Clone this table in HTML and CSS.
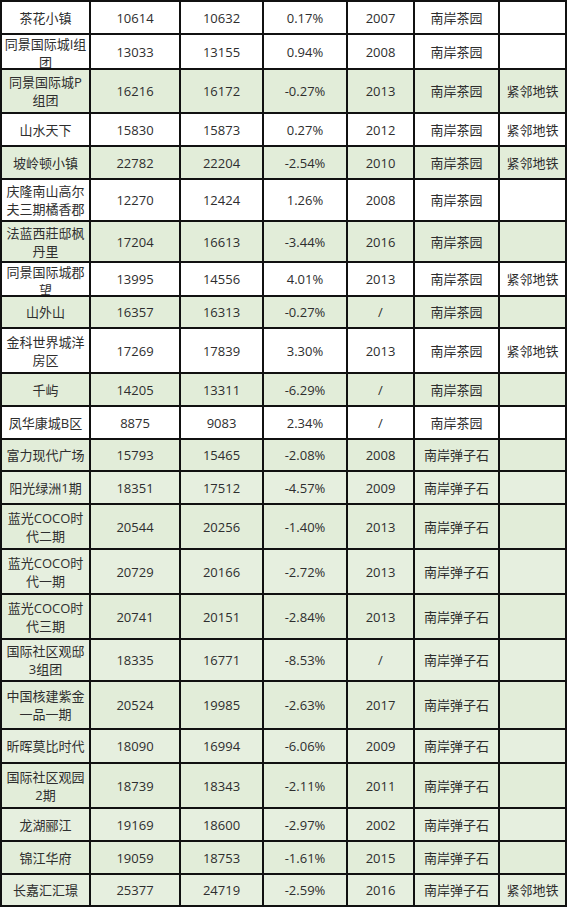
FILE: index.html
```html
<!DOCTYPE html>
<html lang="zh-CN">
<head>
<meta charset="utf-8">
<title>南岸楼盘房价表</title>
<link rel="stylesheet" href="styles.css">
</head>
<body>
<div class="sheet">
  <div class="row w"><div class="c">茶花小镇</div><div class="c">10614</div><div class="c">10632</div><div class="c">0.17%</div><div class="c">2007</div><div class="c">南岸茶园</div><div class="c"></div></div>
  <div class="row w"><div class="c">同景国际城I组团</div><div class="c">13033</div><div class="c">13155</div><div class="c">0.94%</div><div class="c">2008</div><div class="c">南岸茶园</div><div class="c"></div></div>
  <div class="row g"><div class="c">同景国际城P组团</div><div class="c">16216</div><div class="c">16172</div><div class="c">-0.27%</div><div class="c">2013</div><div class="c">南岸茶园</div><div class="c">紧邻地铁</div></div>
  <div class="row w"><div class="c">山水天下</div><div class="c">15830</div><div class="c">15873</div><div class="c">0.27%</div><div class="c">2012</div><div class="c">南岸茶园</div><div class="c">紧邻地铁</div></div>
  <div class="row g"><div class="c">坡岭顿小镇</div><div class="c">22782</div><div class="c">22204</div><div class="c">-2.54%</div><div class="c">2010</div><div class="c">南岸茶园</div><div class="c">紧邻地铁</div></div>
  <div class="row w"><div class="c">庆隆南山高尔夫三期橘香郡</div><div class="c">12270</div><div class="c">12424</div><div class="c">1.26%</div><div class="c">2008</div><div class="c">南岸茶园</div><div class="c"></div></div>
  <div class="row g"><div class="c">法蓝西莊邸枫丹里</div><div class="c">17204</div><div class="c">16613</div><div class="c">-3.44%</div><div class="c">2016</div><div class="c">南岸茶园</div><div class="c"></div></div>
  <div class="row w"><div class="c">同景国际城郡望</div><div class="c">13995</div><div class="c">14556</div><div class="c">4.01%</div><div class="c">2013</div><div class="c">南岸茶园</div><div class="c">紧邻地铁</div></div>
  <div class="row g"><div class="c">山外山</div><div class="c">16357</div><div class="c">16313</div><div class="c">-0.27%</div><div class="c">/</div><div class="c">南岸茶园</div><div class="c"></div></div>
  <div class="row w"><div class="c">金科世界城洋房区</div><div class="c">17269</div><div class="c">17839</div><div class="c">3.30%</div><div class="c">2013</div><div class="c">南岸茶园</div><div class="c">紧邻地铁</div></div>
  <div class="row g"><div class="c">千屿</div><div class="c">14205</div><div class="c">13311</div><div class="c">-6.29%</div><div class="c">/</div><div class="c">南岸茶园</div><div class="c"></div></div>
  <div class="row w"><div class="c">凤华康城B区</div><div class="c">8875</div><div class="c">9083</div><div class="c">2.34%</div><div class="c">/</div><div class="c">南岸茶园</div><div class="c"></div></div>
  <div class="row g"><div class="c">富力现代广场</div><div class="c">15793</div><div class="c">15465</div><div class="c">-2.08%</div><div class="c">2008</div><div class="c">南岸弹子石</div><div class="c"></div></div>
  <div class="row l"><div class="c">阳光绿洲1期</div><div class="c">18351</div><div class="c">17512</div><div class="c">-4.57%</div><div class="c">2009</div><div class="c">南岸弹子石</div><div class="c"></div></div>
  <div class="row g"><div class="c">蓝光COCO时代二期</div><div class="c">20544</div><div class="c">20256</div><div class="c">-1.40%</div><div class="c">2013</div><div class="c">南岸弹子石</div><div class="c"></div></div>
  <div class="row l"><div class="c">蓝光COCO时代一期</div><div class="c">20729</div><div class="c">20166</div><div class="c">-2.72%</div><div class="c">2013</div><div class="c">南岸弹子石</div><div class="c"></div></div>
  <div class="row g"><div class="c">蓝光COCO时代三期</div><div class="c">20741</div><div class="c">20151</div><div class="c">-2.84%</div><div class="c">2013</div><div class="c">南岸弹子石</div><div class="c"></div></div>
  <div class="row l"><div class="c">国际社区观邸3组团</div><div class="c">18335</div><div class="c">16771</div><div class="c">-8.53%</div><div class="c">/</div><div class="c">南岸弹子石</div><div class="c"></div></div>
  <div class="row g"><div class="c">中国核建紫金一品一期</div><div class="c">20524</div><div class="c">19985</div><div class="c">-2.63%</div><div class="c">2017</div><div class="c">南岸弹子石</div><div class="c"></div></div>
  <div class="row l"><div class="c">昕晖莫比时代</div><div class="c">18090</div><div class="c">16994</div><div class="c">-6.06%</div><div class="c">2009</div><div class="c">南岸弹子石</div><div class="c"></div></div>
  <div class="row g"><div class="c">国际社区观园2期</div><div class="c">18739</div><div class="c">18343</div><div class="c">-2.11%</div><div class="c">2011</div><div class="c">南岸弹子石</div><div class="c"></div></div>
  <div class="row l"><div class="c">龙湖郦江</div><div class="c">19169</div><div class="c">18600</div><div class="c">-2.97%</div><div class="c">2002</div><div class="c">南岸弹子石</div><div class="c"></div></div>
  <div class="row g"><div class="c">锦江华府</div><div class="c">19059</div><div class="c">18753</div><div class="c">-1.61%</div><div class="c">2015</div><div class="c">南岸弹子石</div><div class="c"></div></div>
  <div class="row l"><div class="c">长嘉汇汇璟</div><div class="c">25377</div><div class="c">24719</div><div class="c">-2.59%</div><div class="c">2016</div><div class="c">南岸弹子石</div><div class="c">紧邻地铁</div></div>
</div>
</body>
</html>
```
FILE: styles.css
```css
html, body {
  margin: 0;
  padding: 0;
  background: #ffffff;
}

body {
  font-family: "Open Sans", "Noto Sans CJK SC", sans-serif;
  font-size: 13px;
  color: #2e2e2e;
}

.sheet {
  display: grid;
  width: max-content;
  grid-template-columns: 87px 88px 81px 82px 65px 83px 65px;
  grid-template-rows:
    31px 33px 42px 31px 31px 40px 39px 32px 30px 43px 31px 31px
    30px 31px 43px 43px 43px 40px 46px 32px 43px 31px 31px 30px;
  gap: 2px;
  padding: 2px;
  background: #111111;
}

.row {
  display: contents;
}

.c {
  display: flex;
  align-items: safe center;
  justify-content: center;
  text-align: center;
  padding: 0 1px;
  line-height: 18px;
  overflow: hidden;
  word-break: break-all;
}

.row.w .c {
  background: #ffffff;
}

.row.g .c {
  background: #e2edd9;
}

.row.l .c {
  background: #e6efdf;
}
```
